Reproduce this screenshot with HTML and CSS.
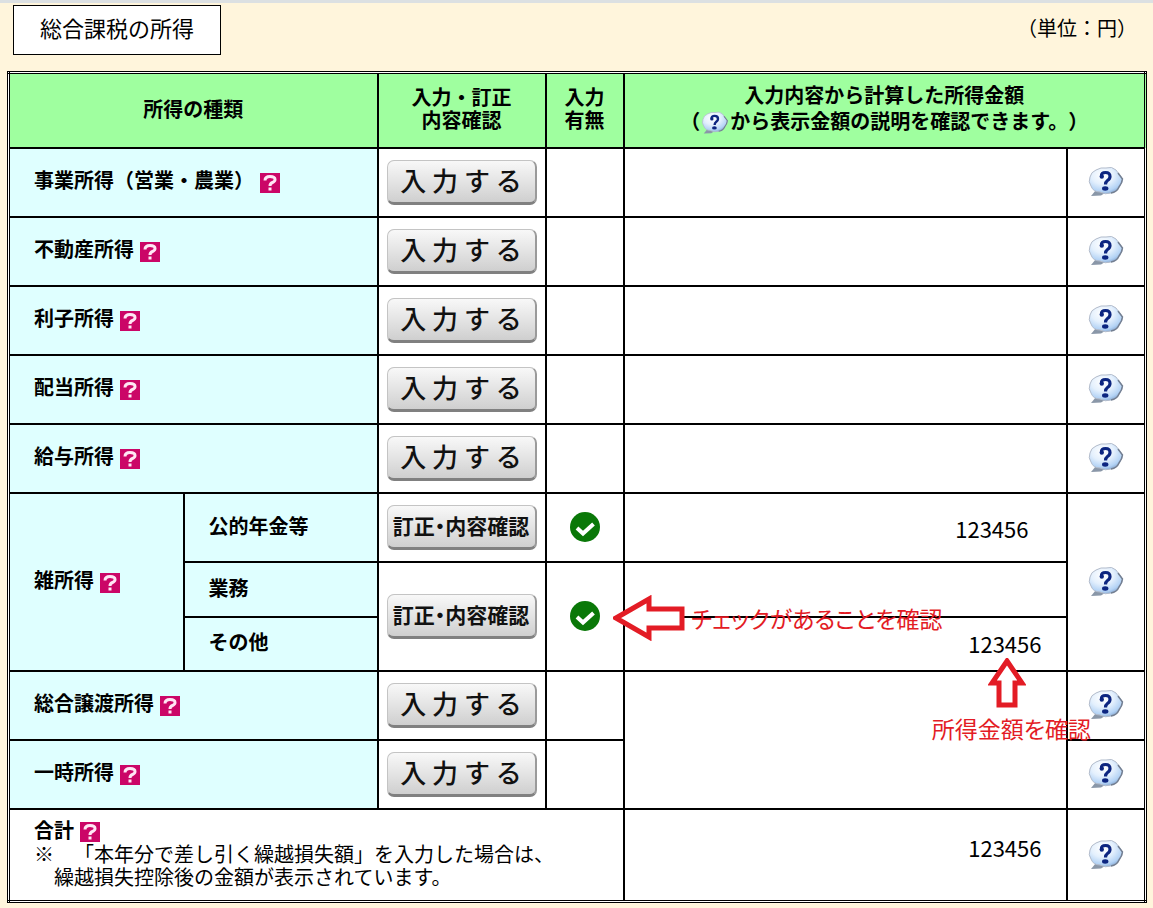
FILE: index.html
```
<!DOCTYPE html>
<html lang="ja">
  <head>
    <meta charset="UTF-8" />
    <title>総合課税の所得</title>
    <link rel="stylesheet" href="styles.css">
  </head>

  <body>
    <svg class="symbols" aria-hidden="true">
      <defs>
        <radialGradient id="bubble-fill" cx="0.4" cy="0.3" r="0.75">
          <stop offset="0" stop-color="#ffffff" />
          <stop offset="0.45" stop-color="#e4f0fd" />
          <stop offset="0.8" stop-color="#b4d3f5" />
          <stop offset="1" stop-color="#7fa3cf" />
        </radialGradient>
      </defs>
      <symbol id="bubble" viewBox="0 0 36 32">
        <path d="M8 24 L3 30 L13 29.500 L17 27 Z" fill="#8a97a8" />
        <path d="M8 4 Q13 1 18 2 Q24 0 28 4 Q31 8 34.500 13 Q35 16 31 21 Q29 26 23 27 Q17 29 12 26 Q5 26 3 20 Q0 16 2 11 Q3 6 8 4 Z" fill="url(#bubble-fill)" stroke="#b3bccb" stroke-width="1" />
        <path d="M30 7 L34.500 13 Q34 17 31 21 Q29 26 23 27" fill="none" stroke="#737f92" stroke-width="1.500" />
        <path d="M13.500 10 Q13 6.500 17.500 6.500 Q22 6.500 22 10.500 Q22 13 19.500 14.500 Q17.500 16 17.500 18.500" fill="none" stroke="#0c2580" stroke-width="3.200" />
        <circle cx="13.800" cy="10.500" r="2.200" fill="#0c2580" />
        <ellipse cx="17.200" cy="22.500" rx="3.200" ry="2.200" fill="#0c2580" />
      </symbol>
      <symbol id="help" viewBox="0 0 20 20">
        <rect width="20" height="20" fill="#cb0667" />
        <path d="M5 7.500 Q5 3.500 10 3.500 Q15 3.500 15 6.500 Q15 8.500 12.500 9.500 Q10 10.500 10 13" fill="none" stroke="#ffe6f4" stroke-width="3" />
        <rect x="8.500" y="14.500" width="3" height="3" fill="#ffe6f4" />
      </symbol>
      <symbol id="check" viewBox="0 0 30 30">
        <circle cx="15" cy="15" r="15" fill="#0a7808" />
        <path d="M7 16 L13 21.500 L23.500 12" fill="none" stroke="#fff" stroke-width="4" />
      </symbol>
    </svg>

    <header>
      <h1>総合課税の所得</h1>
      <p class="tani">（単位：円）</p>
    </header>

    <main>
      <table>
        <colgroup>
          <col class="shurui">
          <col class="uchiwake">
          <col class="nyuryoku">
          <col class="umu">
          <col>
          <col class="setsumei">
        </colgroup>
        <thead>
          <tr>
            <th colspan="2" scope="col">所得の種類</th>
            <th scope="col">入力・訂正<br>内容確認</th>
            <th scope="col">入力<br>有無</th>
            <th colspan="2" scope="col" class="kingaku-head">入力内容から計算した所得金額<br>（<svg class="bubble-small"><use href="#bubble" /></svg>から表示金額の説明を確認できます。）</th>
          </tr>
        </thead>
        <tbody>
          <tr>
            <th colspan="2" scope="row">事業所得（営業・農業）<a href="#" class="help" aria-label="ヘルプ"><svg><use href="#help" /></svg></a></th>
            <td><button type="button">入 力 す る</button></td>
            <td></td>
            <td></td>
            <td><a href="#" class="bubble" aria-label="説明"><svg><use href="#bubble" /></svg></a></td>
          </tr>
          <tr>
            <th colspan="2" scope="row">不動産所得<a href="#" class="help" aria-label="ヘルプ"><svg><use href="#help" /></svg></a></th>
            <td><button type="button">入 力 す る</button></td>
            <td></td>
            <td></td>
            <td><a href="#" class="bubble" aria-label="説明"><svg><use href="#bubble" /></svg></a></td>
          </tr>
          <tr>
            <th colspan="2" scope="row">利子所得<a href="#" class="help" aria-label="ヘルプ"><svg><use href="#help" /></svg></a></th>
            <td><button type="button">入 力 す る</button></td>
            <td></td>
            <td></td>
            <td><a href="#" class="bubble" aria-label="説明"><svg><use href="#bubble" /></svg></a></td>
          </tr>
          <tr>
            <th colspan="2" scope="row">配当所得<a href="#" class="help" aria-label="ヘルプ"><svg><use href="#help" /></svg></a></th>
            <td><button type="button">入 力 す る</button></td>
            <td></td>
            <td></td>
            <td><a href="#" class="bubble" aria-label="説明"><svg><use href="#bubble" /></svg></a></td>
          </tr>
          <tr>
            <th colspan="2" scope="row">給与所得<a href="#" class="help" aria-label="ヘルプ"><svg><use href="#help" /></svg></a></th>
            <td><button type="button">入 力 す る</button></td>
            <td></td>
            <td></td>
            <td><a href="#" class="bubble" aria-label="説明"><svg><use href="#bubble" /></svg></a></td>
          </tr>
          <tr>
            <th rowspan="3" scope="rowgroup">雑所得<a href="#" class="help" aria-label="ヘルプ"><svg><use href="#help" /></svg></a></th>
            <th scope="row">公的年金等</th>
            <td><button type="button" class="teisei">訂正・内容確認</button></td>
            <td><svg class="check" role="img" aria-label="入力あり"><use href="#check" /></svg></td>
            <td class="kingaku nenkin">123456</td>
            <td rowspan="3"><a href="#" class="bubble" aria-label="説明"><svg><use href="#bubble" /></svg></a></td>
          </tr>
          <tr class="gyomu">
            <th scope="row">業務</th>
            <td rowspan="2"><button type="button" class="teisei">訂正・内容確認</button></td>
            <td rowspan="2"><svg class="check" role="img" aria-label="入力あり"><use href="#check" /></svg></td>
            <td></td>
          </tr>
          <tr class="sonota">
            <th scope="row">その他</th>
            <td class="kingaku">123456</td>
          </tr>
          <tr>
            <th colspan="2" scope="row">総合譲渡所得<a href="#" class="help" aria-label="ヘルプ"><svg><use href="#help" /></svg></a></th>
            <td><button type="button">入 力 す る</button></td>
            <td></td>
            <td rowspan="2"></td>
            <td><a href="#" class="bubble" aria-label="説明"><svg><use href="#bubble" /></svg></a></td>
          </tr>
          <tr>
            <th colspan="2" scope="row">一時所得<a href="#" class="help" aria-label="ヘルプ"><svg><use href="#help" /></svg></a></th>
            <td><button type="button">入 力 す る</button></td>
            <td></td>
            <td><a href="#" class="bubble" aria-label="説明"><svg><use href="#bubble" /></svg></a></td>
          </tr>
        </tbody>
        <tfoot>
          <tr>
            <th colspan="4" scope="row">
              合計<a href="#" class="help" aria-label="ヘルプ"><svg><use href="#help" /></svg></a>
              <p>※　「本年分で差し引く繰越損失額」を入力した場合は、<br>　繰越損失控除後の金額が表示されています。</p>
            </th>
            <td class="kingaku goukei">123456</td>
            <td><a href="#" class="bubble" aria-label="説明"><svg><use href="#bubble" /></svg></a></td>
          </tr>
        </tfoot>
      </table>

      <p class="chui chui-check">
        <svg width="72" height="46" viewBox="0 0 72 46"><path d="M3 23 L36 4 V14 H69 V33 H36 V42 Z" /></svg>
        <span>チェックがあることを確認</span>
      </p>
      <p class="chui chui-kingaku">
        <svg width="38" height="50" viewBox="0 0 38 50"><path d="M19 3 L34 25 H27 V47 H11 V25 H4 Z" /></svg>
        <span>所得金額を確認</span>
      </p>
    </main>
  </body>
</html>
```
FILE: styles.css
```
* {
  box-sizing: border-box;
}

body {
  margin: 0;
  padding: 0 6px 4px 7px;
  border-top: 3px solid #dce0e2;
  background-color: #fff5dc;
  color: black;
  font-family: "Noto Sans CJK JP", sans-serif;
  font-size: 20px;
  line-height: 24px;
  text-spacing-trim: space-all;
}

.symbols {
  position: absolute;
  width: 0;
  height: 0;
}

header {
  display: flex;
  justify-content: space-between;
  align-items: flex-start;
  padding: 2px 10px 16px 6px;
}

h1 {
  margin: 0;
  padding: 8px 26px 14px;
  border: 1px solid black;
  background-color: white;
  font-size: 22px;
  font-weight: normal;
  line-height: 26px;
}

.tani {
  margin: 11px 0 0;
}

main {
  position: relative;
}

table {
  width: 100%;
  border-collapse: collapse;
  border: 3px double black;
  table-layout: fixed;
  background-color: white;
}

.shurui {
  width: 175px;
}

.uchiwake {
  width: 194px;
}

.nyuryoku {
  width: 168px;
}

.umu {
  width: 78px;
}

.setsumei {
  width: 79px;
}

th,
td {
  height: 69px;
  padding: 0;
  border: 2px solid black;
  text-align: center;
}

thead th {
  height: 75px;
  padding-bottom: 4px;
  background-color: #9fff9f;
  line-height: 23px;
}

thead .kingaku-head {
  line-height: 26px;
}

tbody th {
  padding: 0 0 3px 24px;
  background-color: #dfffff;
  text-align: left;
}

.gyomu th,
.gyomu td {
  height: 55px;
}

.sonota th,
.sonota td {
  height: 54px;
}

tfoot th,
tfoot td {
  height: 93px;
}

tfoot th {
  padding: 0 0 4px 24px;
  text-align: left;
  line-height: 23px;
}

tfoot p {
  margin: 0;
  font-weight: normal;
}

button {
  display: block;
  width: 150px;
  height: 45px;
  margin: 0 auto;
  padding: 0 0 2px;
  border: 1px solid #c4c4c4;
  border-right: 2px solid #9a9a9a;
  border-bottom: 3px solid #808080;
  border-radius: 7px;
  background: linear-gradient(#f8f8f8, #e4e4e4 50%, #cfcfcf);
  color: #111;
  font-family: inherit;
  font-size: 26px;
  font-weight: 500;
  line-height: 36px;
  white-space: nowrap;
  cursor: pointer;
}

.teisei {
  font-size: 21px;
  font-weight: bold;
  font-feature-settings: "palt";
}

.help svg {
  width: 20px;
  height: 20px;
  margin-left: 6px;
  vertical-align: -5px;
}

tfoot .help svg {
  vertical-align: -4px;
}

.bubble svg {
  display: block;
  width: 36px;
  height: 32px;
  margin: 0 auto;
}

.bubble-small {
  width: 28px;
  height: 24px;
  margin: 0 1px;
  vertical-align: -6px;
}

.check {
  display: block;
  width: 30px;
  height: 30px;
  margin: 0 auto;
}

.kingaku {
  padding-right: 24px;
  padding-bottom: 2px;
  text-align: right;
  font-size: 22px;
}

.nenkin {
  padding-top: 4px;
  padding-right: 37px;
}

.goukei {
  padding-bottom: 16px;
}

/* 赤い矢印と注意書き */
.chui {
  position: absolute;
  display: flex;
  margin: 0;
  color: #e31c25;
  font-size: 23px;
  font-feature-settings: "palt";
  white-space: nowrap;
  pointer-events: none;
}

.chui path {
  fill: white;
  stroke: #e31c25;
  stroke-width: 5;
}

.chui-check {
  top: 524px;
  left: 606px;
  align-items: center;
  gap: 6px;
}

.chui-kingaku {
  right: 56px;
  bottom: 163px;
  flex-direction: column;
  gap: 8px;
}

.chui-kingaku svg {
  margin-left: 56px;
}
```
